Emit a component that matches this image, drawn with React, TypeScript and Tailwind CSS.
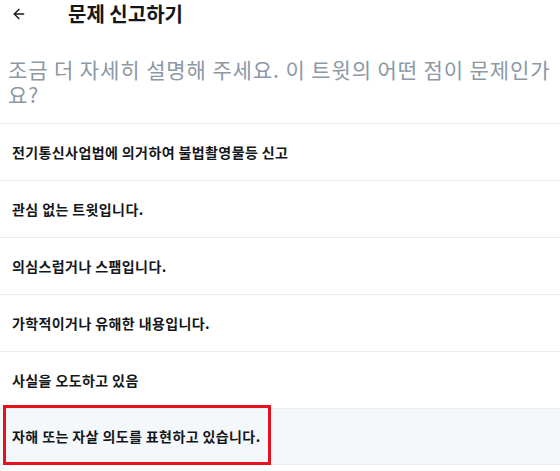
import { ArrowLeft } from 'lucide-react';

const reasons = [
    '전기통신사업법에 의거하여 불법촬영물등 신고',
    '관심 없는 트윗입니다.',
    '의심스럽거나 스팸입니다.',
    '가학적이거나 유해한 내용입니다.',
    '사실을 오도하고 있음',
    '자해 또는 자살 의도를 표현하고 있습니다.',
];

export default function App() {
    return (
        <div
            className="w-[560px] h-[471px] bg-white overflow-hidden text-[#14171a]"
            style={{ fontFamily: '"Noto Sans CJK KR", "Noto Sans", sans-serif' }}
        >
            {/* header */}
            <div className="flex items-center h-[28px]">
                <ArrowLeft className="w-[16px] h-[16px] ml-[11px]" strokeWidth={2} />
                <h1 className="ml-[41px] text-[20px] font-bold leading-none">문제 신고하기</h1>
            </div>

            <p className="px-[8px] pt-[29px] pb-[16px] text-[21px] tracking-[0.9px] leading-[25px] text-[#8b98a5]">
                조금 더 자세히 설명해 주세요. 이 트윗의 어떤 점이 문제인가요?
            </p>

            <ul className="relative">
                {reasons.map((reason, i) => {
                    const last = i === reasons.length - 1;
                    return (
                        <li
                            key={reason}
                            className={`flex items-center h-[57px] pl-[12px] border-t border-[#e9edf0] text-[14px] tracking-[0.4px] font-bold ${
                                last ? 'bg-[#f5f8fa] border-b' : ''
                            }`}
                        >
                            {reason}
                        </li>
                    );
                })}
                <div className="absolute left-[3px] bottom-[0px] w-[268px] h-[60px] border-[3px] border-[#e8101c] pointer-events-none" />
            </ul>
        </div>
    );
}
